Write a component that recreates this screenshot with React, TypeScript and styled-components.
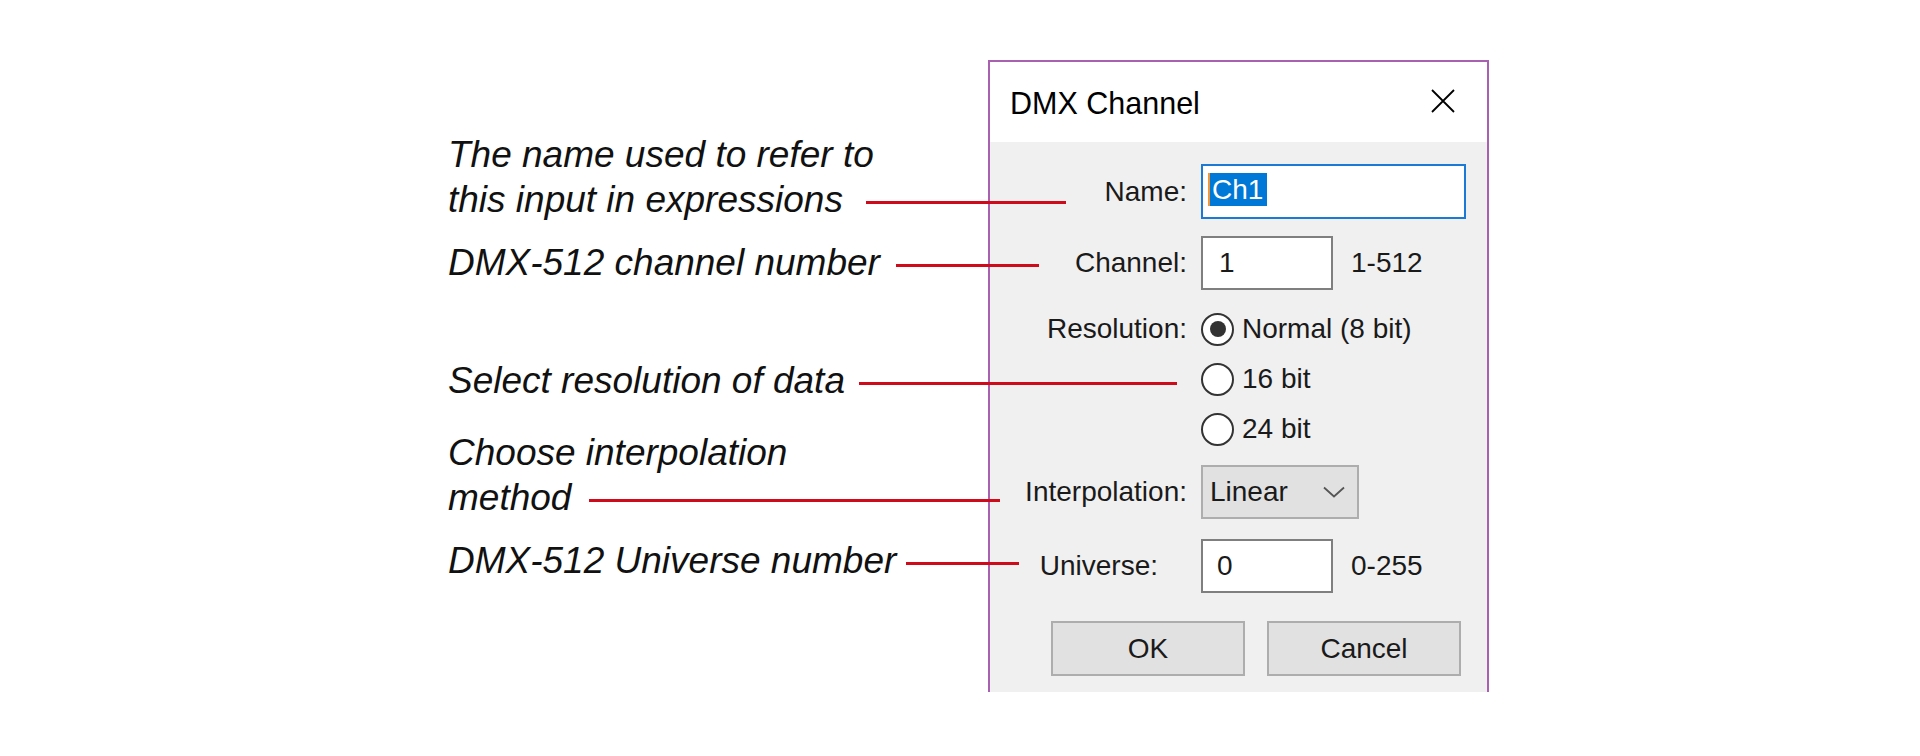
import React from 'react'
import styled, { createGlobalStyle } from 'styled-components'

const GlobalStyle = createGlobalStyle`
  html, body {
    margin: 0;
    padding: 0;
    background: #ffffff;
  }
  body {
    font-family: 'Liberation Sans', Arial, sans-serif;
  }
  * {
    box-sizing: border-box;
  }
`

const Page = styled.div`
  display: flex;
  align-items: flex-start;
  width: 1920px;
  height: 756px;
  padding-left: 448px;
  background: #ffffff;
  overflow: hidden;
`

// callout column on the left
const Notes = styled.div`
  position: relative;
  z-index: 1;
  width: 540px;
  flex-shrink: 0;
  padding-top: 132px;
  display: flex;
  flex-direction: column;
  align-items: flex-start;
`

const Note = styled.div<{ $width: number; $top: number }>`
  display: flex;
  flex-direction: column;
  width: ${(p) => p.$width}px;
  margin-top: ${(p) => p.$top}px;
  font-family: 'Liberation Sans', Arial, sans-serif;
  font-style: italic;
  font-size: 37px;
  line-height: 45px;
  color: #111111;
  white-space: nowrap;
`

const LastLine = styled.div`
  display: flex;
  align-items: flex-end;
`

const Leader = styled.span<{ $gap: number }>`
  flex: 1;
  height: 3px;
  margin-left: ${(p) => p.$gap}px;
  margin-bottom: 18px;
  background: #cf0a1a;
`

// the dialog
const Dialog = styled.div`
  flex-shrink: 0;
  width: 501px;
  height: 632px;
  margin-top: 60px;
  border: 2px solid #a860b0;
  border-bottom: none;
  background: #f0f0f0;
  display: flex;
  flex-direction: column;
  font-family: 'Liberation Sans', Arial, sans-serif;
  color: #1a1a1a;
`

const TitleBar = styled.div`
  height: 80px;
  flex-shrink: 0;
  background: #ffffff;
  display: flex;
  align-items: center;
  justify-content: space-between;
  padding: 2px 32px 0 20px;
`

const Title = styled.div`
  font-size: 30.5px;
  line-height: 1;
  color: #000000;
`

const CloseButton = styled.div`
  display: flex;
  width: 24px;
  height: 24px;
  margin-top: -4px;
`

const Row = styled.div<{ $top: number; $height?: number }>`
  display: grid;
  grid-template-columns: 197px 1fr;
  column-gap: 14px;
  align-items: center;
  margin-top: ${(p) => p.$top}px;
  height: ${(p) => (p.$height ? `${p.$height}px` : 'auto')};
`

const Label = styled.div<{ $pad?: number; $lineHeight?: number }>`
  text-align: right;
  font-size: 28px;
  padding-right: ${(p) => p.$pad || 0}px;
  line-height: ${(p) => (p.$lineHeight ? `${p.$lineHeight}px` : 'normal')};
  align-self: ${(p) => (p.$lineHeight ? 'start' : 'center')};
`

const Control = styled.div`
  display: flex;
  align-items: center;
  height: 100%;
  gap: 18px;
`

const TextBox = styled.div<{ $width: number; $focus?: boolean; $pad: number }>`
  width: ${(p) => p.$width}px;
  height: 100%;
  background: #ffffff;
  border: 2px solid ${(p) => (p.$focus ? '#1a7ad6' : '#7f7f7f')};
  display: flex;
  align-items: center;
  padding-left: ${(p) => p.$pad}px;
  font-size: 28px;
`

const Selected = styled.span`
  display: inline-block;
  margin-top: -4px;
  line-height: 33px;
  padding: 0 4px 0 2px;
  background: #0078d7;
  color: #ffffff;
  border-left: 2px solid #f0983a;
`

const Hint = styled.span`
  font-size: 28px;
`

const Options = styled.div`
  display: flex;
  flex-direction: column;
`

const Option = styled.div`
  display: flex;
  align-items: center;
  height: 50px;
  gap: 8px;
  font-size: 28px;
`

const Radio = styled.span<{ $checked?: boolean }>`
  width: 33px;
  height: 33px;
  border-radius: 50%;
  border: 2px solid #333333;
  background: #ffffff;
  display: flex;
  align-items: center;
  justify-content: center;

  &::after {
    content: '';
    display: ${(p) => (p.$checked ? 'block' : 'none')};
    width: 16px;
    height: 16px;
    border-radius: 50%;
    background: #333333;
  }
`

const Select = styled.div`
  width: 158px;
  height: 100%;
  background: #e1e1e1;
  border: 2px solid #adadad;
  display: flex;
  align-items: center;
  justify-content: space-between;
  padding: 0 12px 0 7px;
  font-size: 28px;
`

const Buttons = styled.div`
  display: flex;
  justify-content: flex-end;
  gap: 22px;
  padding-right: 26px;
  margin-top: 28px;
`

const Button = styled.div`
  width: 194px;
  height: 55px;
  background: #e1e1e1;
  border: 2px solid #adadad;
  display: flex;
  align-items: center;
  justify-content: center;
  font-size: 28px;
`

const notes = [
  { lines: ['The name used to refer to', 'this input in expressions'], width: 618, gap: 23, top: 0 },
  { lines: ['DMX-512 channel number'], width: 591, gap: 16, top: 18 },
  { lines: ['Select resolution of data'], width: 729, gap: 14, top: 73 },
  { lines: ['Choose interpolation', 'method'], width: 552, gap: 18, top: 27 },
  { lines: ['DMX-512 Universe number'], width: 571, gap: 10, top: 18 },
]

export default function App() {
  return (
    <>
      <GlobalStyle />
      <Page>
        <Notes>
          {notes.map((n) => {
            const last = n.lines[n.lines.length - 1]
            return (
              <Note key={n.lines[0]} $width={n.width} $top={n.top}>
                {n.lines.slice(0, -1).map((l) => (
                  <div key={l}>{l}</div>
                ))}
                <LastLine>
                  <span>{last}</span>
                  <Leader $gap={n.gap} />
                </LastLine>
              </Note>
            )
          })}
        </Notes>

        <Dialog>
          <TitleBar>
            <Title>DMX Channel</Title>
            <CloseButton>
              <svg width="24" height="24" viewBox="0 0 24 24">
                <path d="M1 1 L23 23 M23 1 L1 23" stroke="#000" strokeWidth="1.8" fill="none" />
              </svg>
            </CloseButton>
          </TitleBar>

          <Row $top={22} $height={55}>
            <Label>Name:</Label>
            <Control>
              <TextBox $width={265} $focus $pad={5}>
                <Selected>Ch1</Selected>
              </TextBox>
            </Control>
          </Row>

          <Row $top={17} $height={54}>
            <Label>Channel:</Label>
            <Control>
              <TextBox $width={132} $pad={16}>1</TextBox>
              <Hint>1-512</Hint>
            </Control>
          </Row>

          <Row $top={14}>
            <Label $lineHeight={50}>Resolution:</Label>
            <Options>
              <Option>
                <Radio $checked />
                Normal (8 bit)
              </Option>
              <Option>
                <Radio />
                16 bit
              </Option>
              <Option>
                <Radio />
                24 bit
              </Option>
            </Options>
          </Row>

          <Row $top={11} $height={54}>
            <Label>Interpolation:</Label>
            <Control>
              <Select>
                Linear
                <svg width="22" height="12" viewBox="0 0 22 12">
                  <path d="M1 1.5 L11 10.5 L21 1.5" stroke="#555" strokeWidth="1.8" fill="none" />
                </svg>
              </Select>
            </Control>
          </Row>

          <Row $top={20} $height={54}>
            <Label $pad={29}>Universe:</Label>
            <Control>
              <TextBox $width={132} $pad={14}>0</TextBox>
              <Hint>0-255</Hint>
            </Control>
          </Row>

          <Buttons>
            <Button>OK</Button>
            <Button>Cancel</Button>
          </Buttons>
        </Dialog>
      </Page>
    </>
  )
}
